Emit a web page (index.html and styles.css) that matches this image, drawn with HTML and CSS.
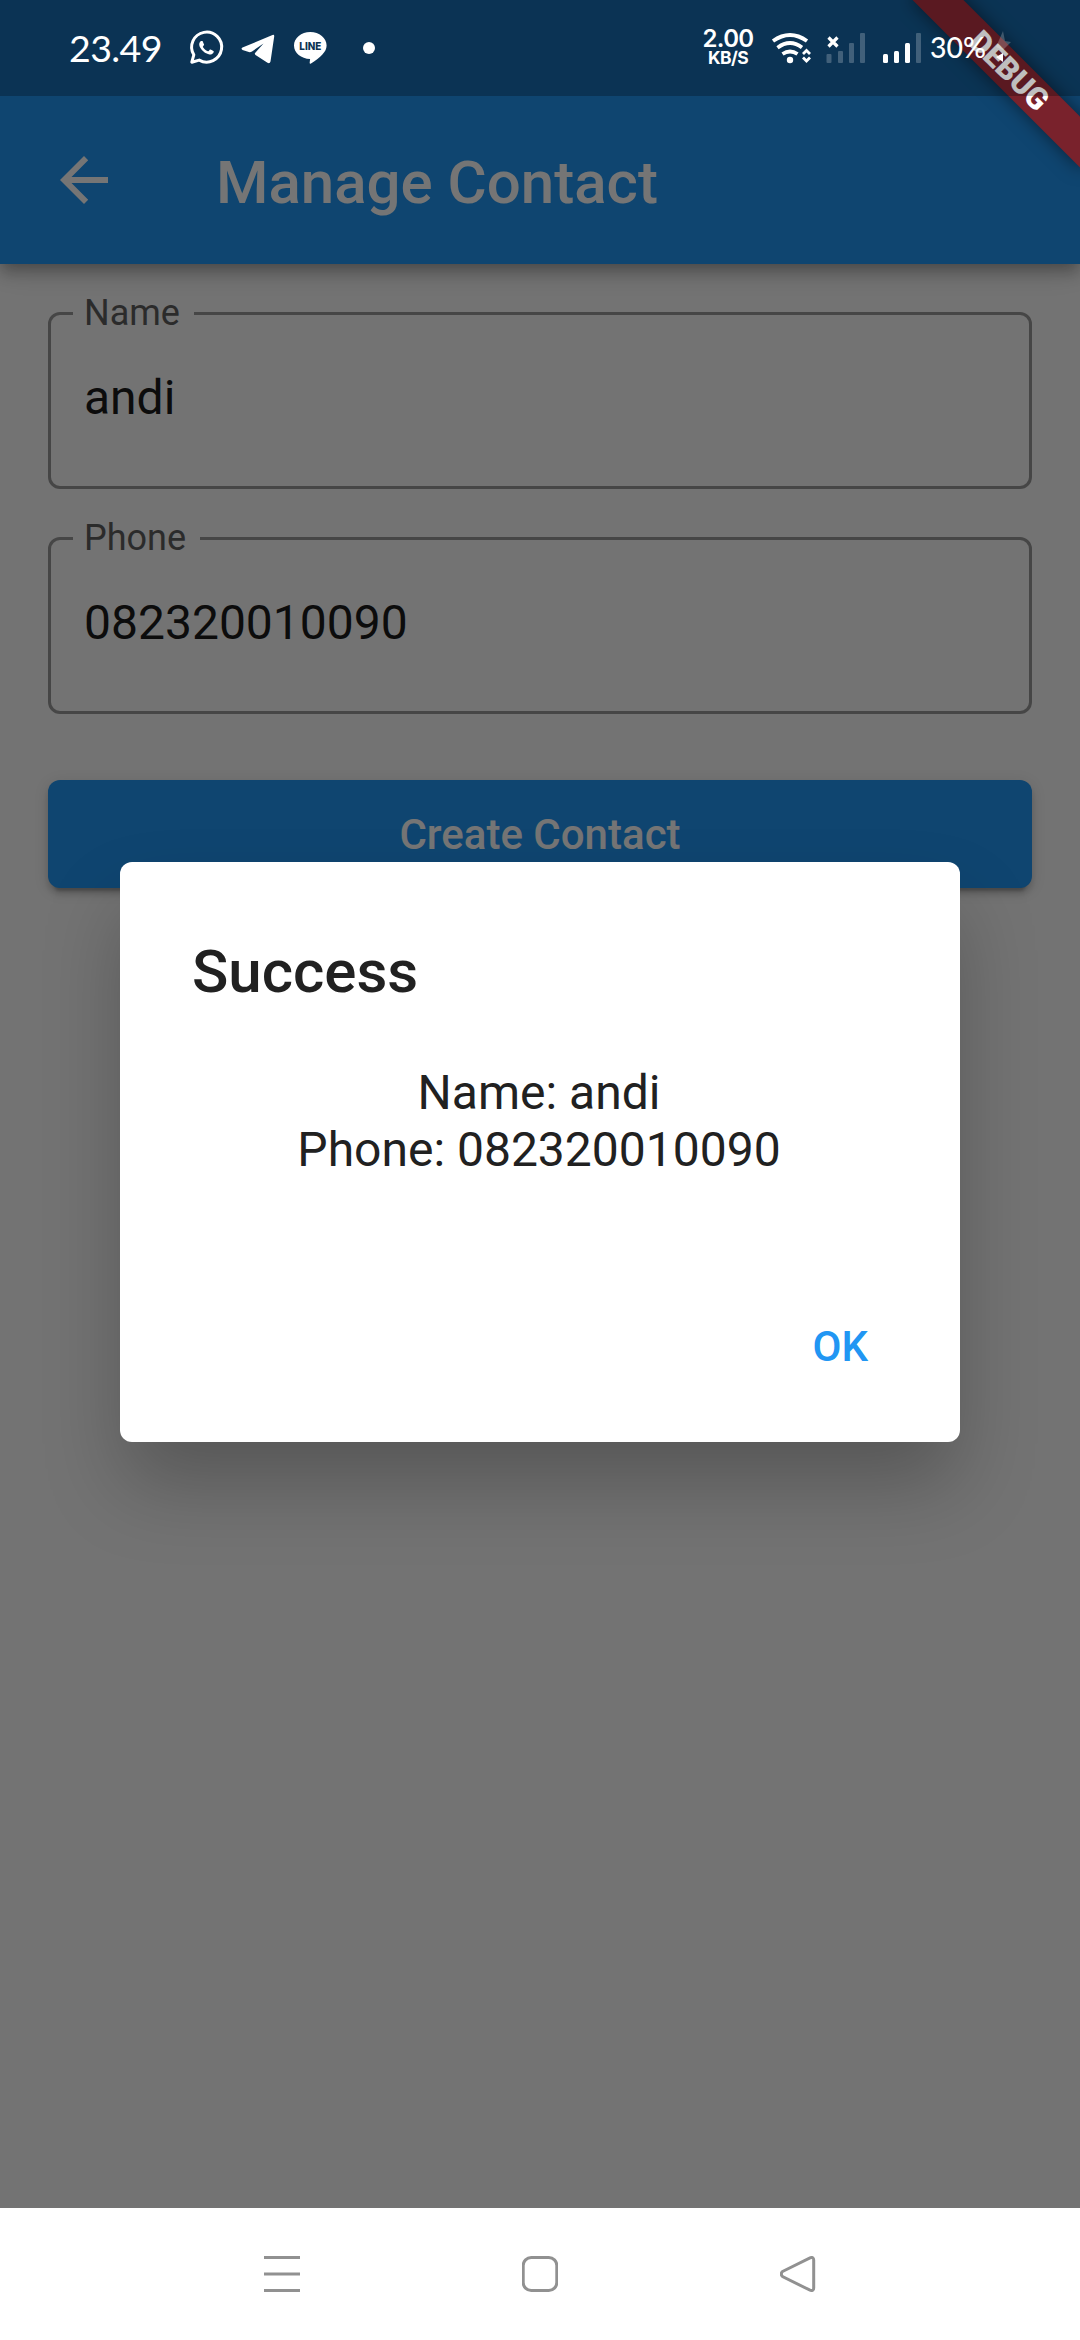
FILE: index.html
```html
<!DOCTYPE html>
<html lang="id">
<head>
<meta charset="utf-8">
<title>Manage Contact</title>
<link rel="stylesheet" href="styles.css">
</head>
<body>
<div class="device">
  <div class="app">
    <header class="app-bar">
      <svg class="back" width="48" height="48" viewBox="0 0 48 48"><path d="M48 21H11.5L28.2 4.2 24 0 0 24l24 24 4.2-4.2L11.5 27H48z" fill="#fff"/></svg>
      <h1 class="app-title">Manage Contact</h1>
    </header>
    <main class="form">
      <fieldset class="field"><legend>Name</legend><div class="value">andi</div></fieldset>
      <fieldset class="field"><legend>Phone</legend><div class="value">082320010090</div></fieldset>
      <button class="create">Create Contact</button>
    </main>
    <div class="barrier">
      <section class="dialog">
        <h2 class="dialog-title">Success</h2>
        <p class="dialog-text">Name: andi<br>Phone: 082320010090</p>
        <div class="actions"><button class="ok">OK</button></div>
      </section>
    </div>
    <div class="banner-clip"><div class="banner">DEBUG</div></div>
    <div class="status-bar">
      <span class="clock">23.49</span>
      <svg class="status-icons" width="170" height="40" viewBox="184 28 170 40">
        <path d="M191.8 62.2l2-7.4a15 15 0 1 1 5.4 5.3z" fill="none" stroke="#fff" stroke-width="3" stroke-linejoin="round"/>
        <path transform="translate(192 33.4) scale(1.2)" d="M17.472 14.382c-.297-.149-1.758-.867-2.03-.967-.273-.099-.471-.148-.67.15-.197.297-.767.966-.94 1.164-.173.199-.347.223-.644.075-.297-.15-1.255-.463-2.39-1.475-.883-.788-1.48-1.761-1.653-2.059-.173-.297-.018-.458.13-.606.134-.133.298-.347.446-.52.149-.174.198-.298.298-.497.099-.198.05-.371-.025-.52-.075-.149-.669-1.612-.916-2.207-.242-.579-.487-.5-.669-.51-.173-.008-.371-.01-.57-.01-.198 0-.52.074-.792.372-.272.297-1.04 1.016-1.04 2.479 0 1.462 1.065 2.875 1.213 3.074.149.198 2.096 3.2 5.077 4.487.709.306 1.262.489 1.694.625.712.227 1.36.195 1.871.118.571-.085 1.758-.719 2.006-1.413.248-.694.248-1.289.173-1.413-.074-.124-.272-.198-.57-.347" fill="#fff"/>
        <path d="M242.500 47.600L272.500 35q2-.6 1.700 1.500L270.500 61.500q-.7 2.500-3 1.300L255.500 55q-1.300-1-.2-2.200L263.500 43.500 252 51.500q-1.500 1-3.200.6L242.500 50q-1.900-1.200 0-2.400z" fill="#fff"/>
        <path d="M310.300 32c9 0 16.300 6 16.300 13.400 0 6.500-6 11.500-15.600 18.200-1.300.6-1.500-.3-1.200-2.100l.3-2.600c-9-.3-16.100-6-16.100-13.500C294 38 301.300 32 310.300 32z" fill="#fff"/>
        <text x="310.300" y="50" class="line-text" textLength="22" lengthAdjust="spacingAndGlyphs">LINE</text>
      </svg>
      <i class="dot"></i>
      <div class="speed"><b>2.00</b><small>KB/S</small></div>
      <svg class="signals" width="152" height="40" viewBox="768 28 152 40">
        <g fill="none" stroke="#fff" stroke-width="3.800">
          <path d="M772 41Q789 29 806 41M776.500 47.700Q789 38.500 801 47.500M781.500 54Q789 49 796.500 54"/>
          <path d="M802 54l3.500-3.500 3.500 3.500M802 57.500l3.500 3.500 3.500-3.500" stroke-width="2.800"/>
          <path d="M827.500 37.500l9 9m0-9l-9 9" stroke-width="3.200"/>
        </g>
        <circle cx="789" cy="60" r="3.200" fill="#fff"/>
        <g fill="#fff" opacity=".22"><rect x="825.500" y="54" width="5" height="9" rx="1"/><rect x="837" y="51" width="5" height="12" rx="1"/><rect x="848" y="43" width="5" height="20" rx="1"/><rect x="859" y="33" width="5" height="30" rx="1"/><rect x="915" y="33" width="5" height="30" rx="1"/></g>
        <g fill="#fff"><rect x="882" y="54" width="5" height="9" rx="1.500"/><rect x="893" y="51" width="5" height="12" rx="1.500"/><rect x="904" y="43" width="5" height="20" rx="1.500"/></g>
      </svg>
      <span class="battery">30%</span>
      <svg class="power" width="24" height="36" viewBox="992 30 24 36"><path d="M1003 31l2 10 6 1-8 8-7-3z" fill="#fff" opacity=".22"/><path d="M996 57l7-4v9z" fill="#fff"/></svg>
    </div>
  </div>
  <nav class="nav-bar">
    <svg width="36" height="36" viewBox="0 0 36 36"><path d="M0 1.500h36M0 18h36M0 34.500h36"/></svg>
    <svg width="36" height="36" viewBox="0 0 36 36"><rect x="1.200" y="1.500" width="33.600" height="33" rx="8"/></svg>
    <svg width="36" height="36" viewBox="0 0 36 36"><path d="M2.500 15.500L30 1.800Q33.700.5 33.700 4v28Q33.700 35.500 30 34.200L2.500 20.500Q0 18 2.500 15.500z"/></svg>
  </nav>
</div>
</body>
</html>
```
FILE: styles.css
```css
* { box-sizing: border-box; margin: 0; }
body { font-family: Roboto, sans-serif; background: #fff; }
button { border: 0; font: 500 42px/49px Roboto, sans-serif; }
.device { width: 1080px; height: 2340px; display: flex; flex-direction: column; overflow: hidden; }
.app { position: relative; flex: 1; background: #fafafa; overflow: hidden; }

.app-bar { height: 264px; padding: 96px 0 0 60px; display: flex; align-items: center; gap: 108px; background: #2196f3; box-shadow: 0 6px 12px -3px rgba(0,0,0,.2), 0 12px 15px rgba(0,0,0,.14), 0 3px 30px rgba(0,0,0,.12); }
.back { flex: none; }
.app-title { padding-top: 5px; font-size: 60px; line-height: 70px; font-weight: 500; color: #fff; }

.form { padding: 48px; display: flex; flex-direction: column; }
.field { height: 177px; min-width: 0; padding: 0 33px 0 22px; margin-bottom: 48px; border: 3px solid #9a9a9a; border-radius: 12px; }
.field legend { height: 3px; padding: 0 14px 0 11px; font-size: 36px; line-height: 3px; color: #5f5f5f; }
.field .value { padding: 53px 0 0 11px; font-size: 48px; line-height: 60px; color: #1c1c1c; }
.create { margin-top: 18px; height: 108px; border-radius: 12px; color: #fff; background: #2196f3; box-shadow: 0 9px 3px -6px rgba(0,0,0,.2), 0 6px 6px rgba(0,0,0,.14), 0 3px 15px rgba(0,0,0,.12); }

.barrier { position: absolute; inset: 0; padding-top: 96px; display: flex; align-items: center; justify-content: center; background: rgba(0,0,0,.54); }
.dialog { width: 840px; height: 580px; padding: 74px 0 0; display: flex; flex-direction: column; border-radius: 12px; background: #fff; color: #212121; box-shadow: 0 45px 80px -5px rgba(0,0,0,.25); }
.dialog-title { padding: 0 72px; font-size: 60px; line-height: 72px; font-weight: 500; }
.dialog-text { padding: 56px 73px 0 71px; font-size: 48px; line-height: 57px; text-align: center; }
.actions { margin-top: auto; padding: 0 72px 61px; display: flex; justify-content: flex-end; }
.ok { padding: 0 20px 10px; color: #2196f3; background: none; }

.banner-clip { position: absolute; top: 0; right: 0; width: 180px; height: 200px; overflow: hidden; }
.banner { position: absolute; left: -11px; top: 53px; width: 240px; height: 36px; transform: rotate(45deg); background: #79222c; box-shadow: 0 0 18px rgba(0,0,0,.5); color: #fff; font-size: 30.6px; font-weight: 900; line-height: 36px; text-align: center; }

.status-bar { position: absolute; inset: 0 0 auto 0; height: 96px; display: flex; align-items: center; padding-left: 69px; background: rgba(0,0,0,.25); color: #fff; font-family: Lato, sans-serif; }
.clock { width: 115px; font-size: 37.5px; line-height: 46px; letter-spacing: -.6px; }
.line-text { font: 800 10px Inter, sans-serif; fill: #0b3351; text-anchor: middle; }
.dot { width: 12px; height: 12px; margin-left: 9px; border-radius: 50%; background: #fff; }
.speed { width: 52px; margin-left: 327px; display: flex; flex-direction: column; align-items: center; font-family: Inter, sans-serif; }
.speed b { font-size: 24px; line-height: 19px; font-weight: 600; letter-spacing: -.6px; }
.speed small { font-size: 17.5px; line-height: 19px; font-weight: 700; letter-spacing: -.6px; }
.signals { margin-left: 15px; }
.battery { width: 62px; margin-left: 9px; padding-bottom: 2px; font-size: 28.5px; font-weight: 500; }

.nav-bar { height: 132px; display: flex; justify-content: center; align-items: center; gap: 222px; background: #fff; }
.nav-bar svg { fill: none; stroke: #919191; stroke-width: 3; }
```
